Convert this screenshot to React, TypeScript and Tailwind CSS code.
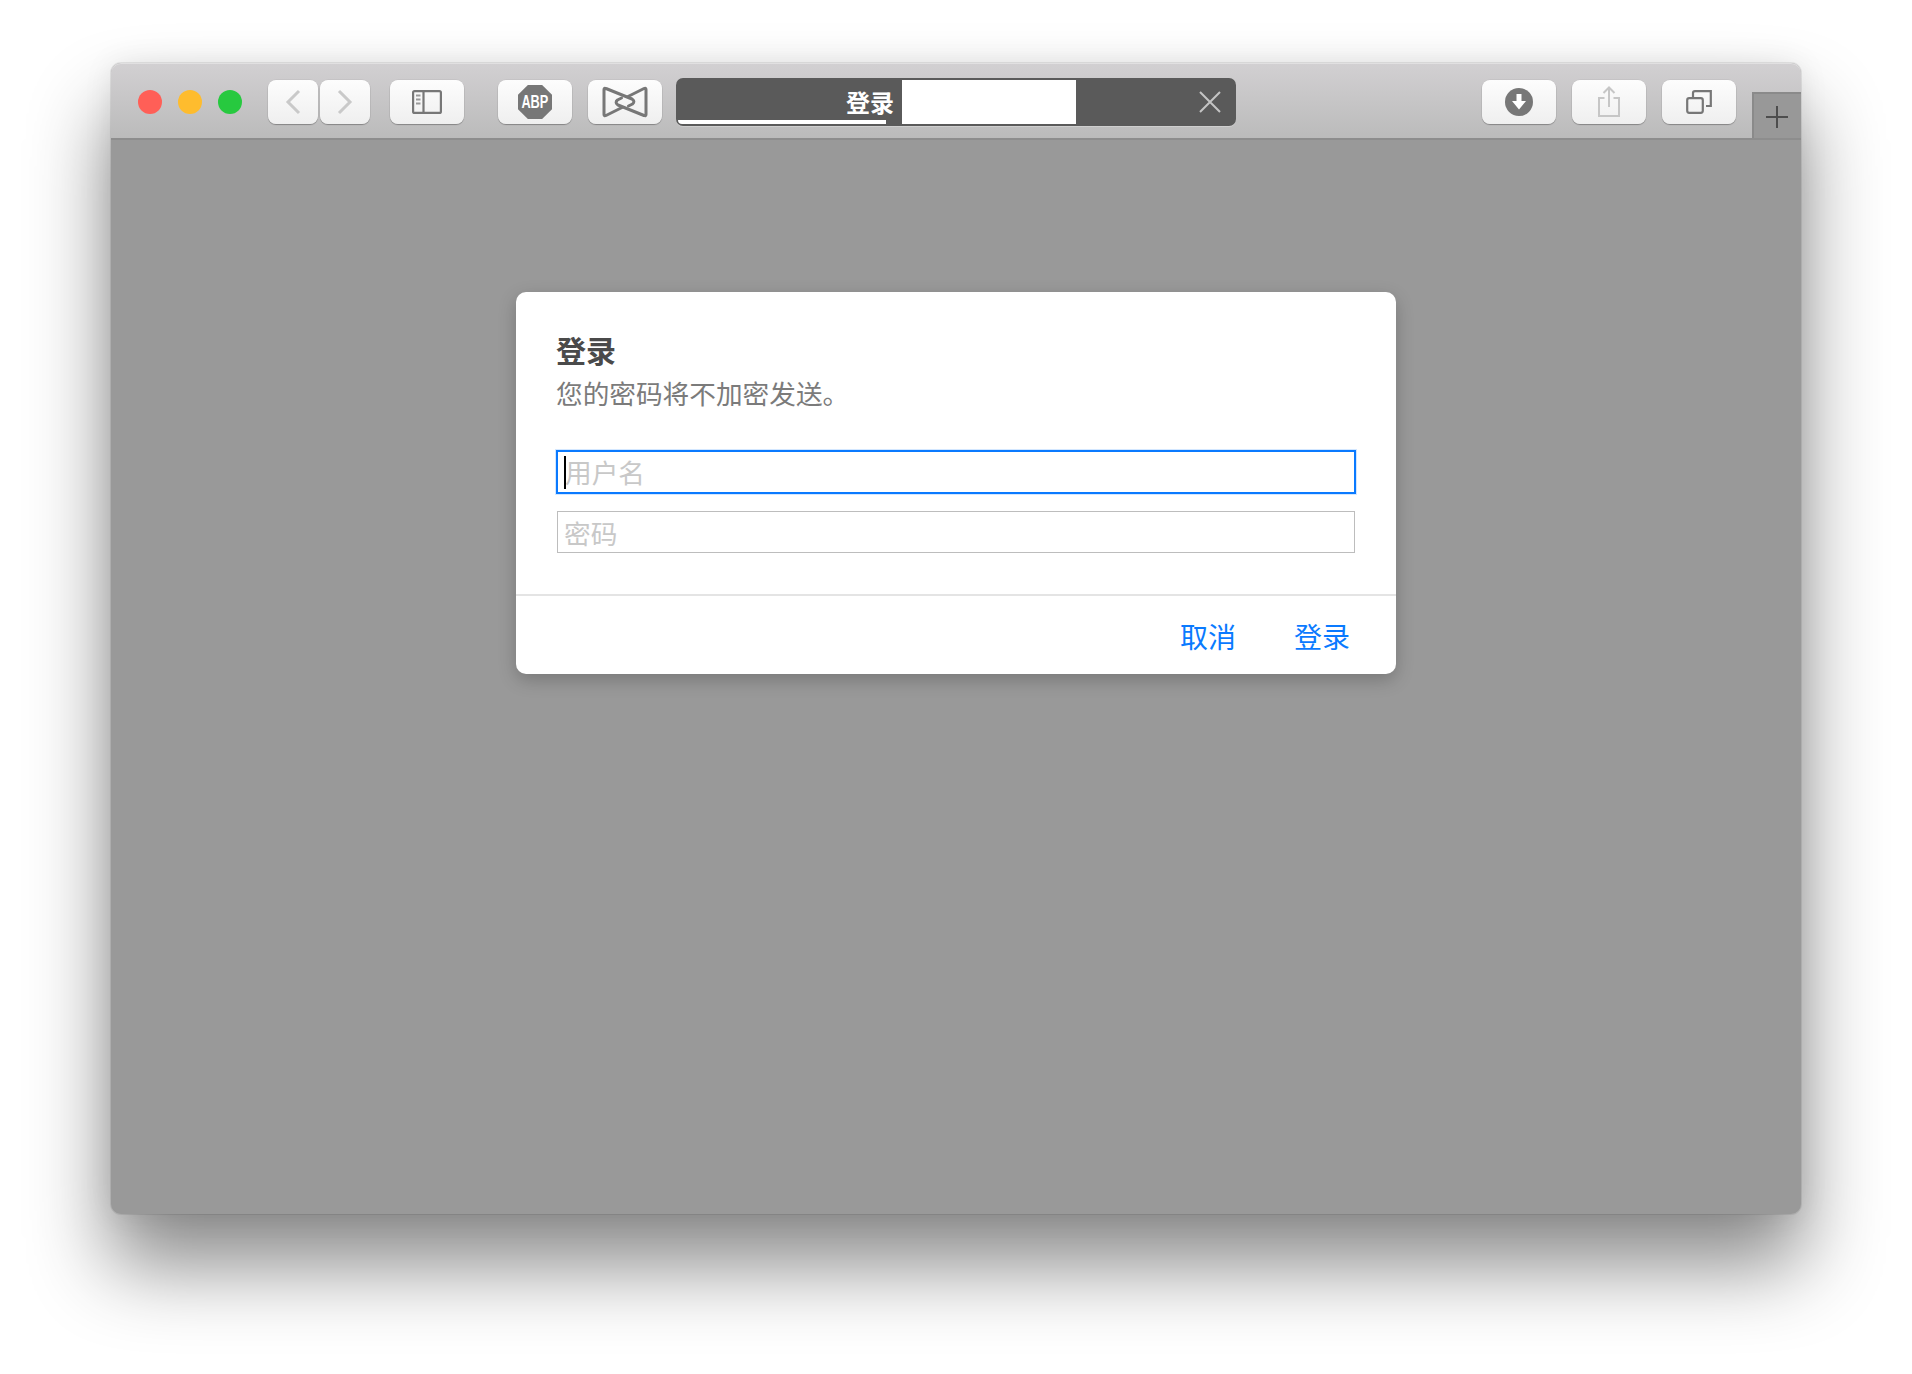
import type { ReactNode } from "react";

function ToolButton({ children, width }: { children: ReactNode; width: string }) {
  return (
    <div
      className={`${width} h-[44px] flex items-center justify-center rounded-[8px] bg-linear-to-b from-[#fdfdfd] to-[#efefef] shadow-[0_1px_1px_rgba(0,0,0,0.28),0_0_0_0.5px_rgba(0,0,0,0.07)]`}
    >
      {children}
    </div>
  );
}

function BackIcon() {
  return (
    <svg width="16" height="26" viewBox="0 0 16 26" fill="none" stroke="#c9c9c9" strokeWidth="3">
      <path d="M14 2 L3 13 L14 24" />
    </svg>
  );
}

function ForwardIcon() {
  return (
    <svg width="16" height="26" viewBox="0 0 16 26" fill="none" stroke="#c9c9c9" strokeWidth="3">
      <path d="M2 2 L13 13 L2 24" />
    </svg>
  );
}

function SidebarIcon() {
  return (
    <svg width="30" height="24" viewBox="0 0 30 24" fill="none" stroke="#777" strokeWidth="2.2">
      <rect x="1.1" y="1.1" width="27.8" height="21.8" rx="1.5" />
      <path d="M11.5 1 V23" />
      <path d="M4 5.5 H8.5 M4 9.5 H8.5 M4 13.5 H8.5" strokeWidth="2" stroke="#999" />
    </svg>
  );
}

function AbpIcon() {
  return (
    <div className="w-[34px] h-[34px] flex items-center justify-center bg-[#777] [clip-path:polygon(29%_0,71%_0,100%_29%,100%_71%,71%_100%,29%_100%,0_71%,0_29%)]">
      <span className="inline-block text-white text-[15px] leading-[18px] font-bold scale-x-[0.85] scale-y-[1.2]">ABP</span>
    </div>
  );
}

function BowIcon() {
  return (
    <svg width="46" height="32" viewBox="0 0 46 32" fill="none" stroke="#777" strokeWidth="3" strokeLinejoin="round" strokeLinecap="round">
      <path d="M20 21.5 L4 29.5 Q2 30.5 2 28.5 L2 3.5 Q2 1.5 4 2.5 L30 13 Q33.5 15.5 30.5 18 L26.5 20" />
      <path d="M26 10.5 L42 2.5 Q44 1.5 44 3.5 L44 28.5 Q44 30.5 42 29.5 L16 19 Q12.5 16.5 15.5 14 L19.5 12" />
    </svg>
  );
}

function DownloadIcon() {
  return (
    <svg width="28" height="28" viewBox="0 0 28 28">
      <circle cx="14" cy="14" r="14" fill="#777" />
      <path d="M11.5 6 H16.5 V13 H21 L14 21.5 L7 13 H11.5 Z" fill="#fff" />
    </svg>
  );
}

function ShareIcon() {
  return (
    <svg width="24" height="32" viewBox="0 0 24 32" fill="none" stroke="#c6c6c6" strokeWidth="2">
      <path d="M7.5 12 H2 V30 H22 V12 H16.5" />
      <path d="M12 21 V2 M6.5 7 L12 1.5 L17.5 7" />
    </svg>
  );
}

function TabsIcon() {
  return (
    <svg width="26" height="24" viewBox="0 0 26 24" fill="none" stroke="#777" strokeWidth="2.2">
      <rect x="1.2" y="8.2" width="15.6" height="14.6" rx="2" />
      <path d="M7 8 V3 Q7 1.2 9 1.2 H24.8 V16 H20" />
    </svg>
  );
}

export default function App() {
  return (
    <div className="w-[1912px] h-[1374px] bg-white pt-[63px] pl-[111px] overflow-hidden font-['Liberation_Sans','Noto_Sans_CJK_SC',sans-serif]">
      <div className="w-[1690px] h-[1151px] flex flex-col rounded-[10px] bg-[#999999] shadow-[0_50px_80px_2px_rgba(0,0,0,0.46),0_0_30px_rgba(0,0,0,0.08),0_0_0_1px_rgba(0,0,0,0.08)] overflow-visible">
        {/* toolbar */}
        <div className="h-[77px] flex items-start pt-[17px] rounded-t-[10px] border-b-2 border-[#8d8d8d] bg-linear-to-b from-[#d2d0d2] to-[#bbbbbb] shadow-[inset_0_1px_0_rgba(255,255,255,0.35)]">
          <div className="flex items-center gap-[16px] ml-[27px] h-[44px]">
            <div className="w-[24px] h-[24px] rounded-full bg-[#ff5f57]" />
            <div className="w-[24px] h-[24px] rounded-full bg-[#febc2e]" />
            <div className="w-[24px] h-[24px] rounded-full bg-[#27c93f]" />
          </div>
          <div className="flex gap-[2px] ml-[26px]">
            <ToolButton width="w-[50px]">
              <BackIcon />
            </ToolButton>
            <ToolButton width="w-[50px]">
              <ForwardIcon />
            </ToolButton>
          </div>
          <div className="ml-[20px]">
            <ToolButton width="w-[74px]">
              <SidebarIcon />
            </ToolButton>
          </div>
          <div className="flex gap-[16px] ml-[34px]">
            <ToolButton width="w-[74px]">
              <AbpIcon />
            </ToolButton>
            <ToolButton width="w-[74px]">
              <BowIcon />
            </ToolButton>
          </div>

          {/* address bar */}
          <div className="relative w-[560px] h-[48px] -mt-[2px] ml-[14px] flex items-center rounded-[7px] bg-[#5a5a5a] shadow-[0_1px_0_rgba(255,255,255,0.25)]">
            <div className="w-[226px] flex justify-end pr-[8px] pt-[4px] text-[24px] leading-[30px] font-bold text-white">登录</div>
            <div className="w-[174px] h-[44px] bg-white" />
            <svg className="ml-[123px]" width="22" height="22" viewBox="0 0 22 22" stroke="#c4c4c4" strokeWidth="2">
              <path d="M1 1 L21 21 M21 1 L1 21" />
            </svg>
            <div className="absolute left-[2px] bottom-[2px] w-[208px] h-[4px] bg-white rounded-bl-[6px]" />
          </div>

          <div className="flex gap-[16px] ml-[246px]">
            <ToolButton width="w-[74px]">
              <DownloadIcon />
            </ToolButton>
            <ToolButton width="w-[74px]">
              <ShareIcon />
            </ToolButton>
            <ToolButton width="w-[74px]">
              <TabsIcon />
            </ToolButton>
          </div>

          {/* new tab */}
          <div className="w-[49px] h-[46px] ml-[16px] mt-[12px] flex items-center justify-center pr-[2px] pt-[1px] bg-[#989898] border-t-2 border-l-2 border-[#8a8a8a]">
            <svg width="24" height="24" viewBox="0 0 24 24" stroke="#4d4d4d" strokeWidth="2">
              <path d="M12 1 V23 M1 12 H23" />
            </svg>
          </div>
        </div>

        {/* page */}
        <div className="flex-1 flex justify-center pt-[152px]">
          <div className="w-[880px] h-[382px] flex flex-col rounded-[10px] bg-white shadow-[0_6px_18px_rgba(0,0,0,0.22)]">
            <div className="px-[40px] pt-[42px] flex-1">
              <h2 className="mb-[6px] text-[30px] leading-[36px] font-bold text-[#4a4a4a]">登录</h2>
              <p className="text-[26.67px] leading-[38px] text-[#7b7b7b]">您的密码将不加密发送。</p>
              <div className="relative mt-[36px]">
                <input
                  placeholder="用户名"
                  className="block w-[800px] h-[44px] pl-[7px] pt-[5px] border-2 border-[#0a7aff] shadow-[0_0_0_1px_rgba(10,122,255,0.18)] text-[26.67px] outline-none placeholder:text-[#c8c8c8]"
                />
                <span className="absolute left-[8px] top-[6px] w-[2px] h-[33px] bg-black" />
              </div>
              <input
                placeholder="密码"
                className="block w-[798px] h-[42px] ml-[1px] mt-[17px] pl-[6px] pt-[6px] border-[1.5px] border-[#bdbdbd] text-[26.67px] outline-none placeholder:text-[#c8c8c8]"
              />
            </div>
            <div className="h-[80px] flex items-center justify-end gap-[58px] pr-[46px] pt-[8px] border-t-2 border-[#e4e4e4]">
              <button className="text-[28px] leading-[34px] text-[#0a7aff]">取消</button>
              <button className="text-[28px] leading-[34px] text-[#0a7aff]">登录</button>
            </div>
          </div>
        </div>
      </div>
    </div>
  );
}
